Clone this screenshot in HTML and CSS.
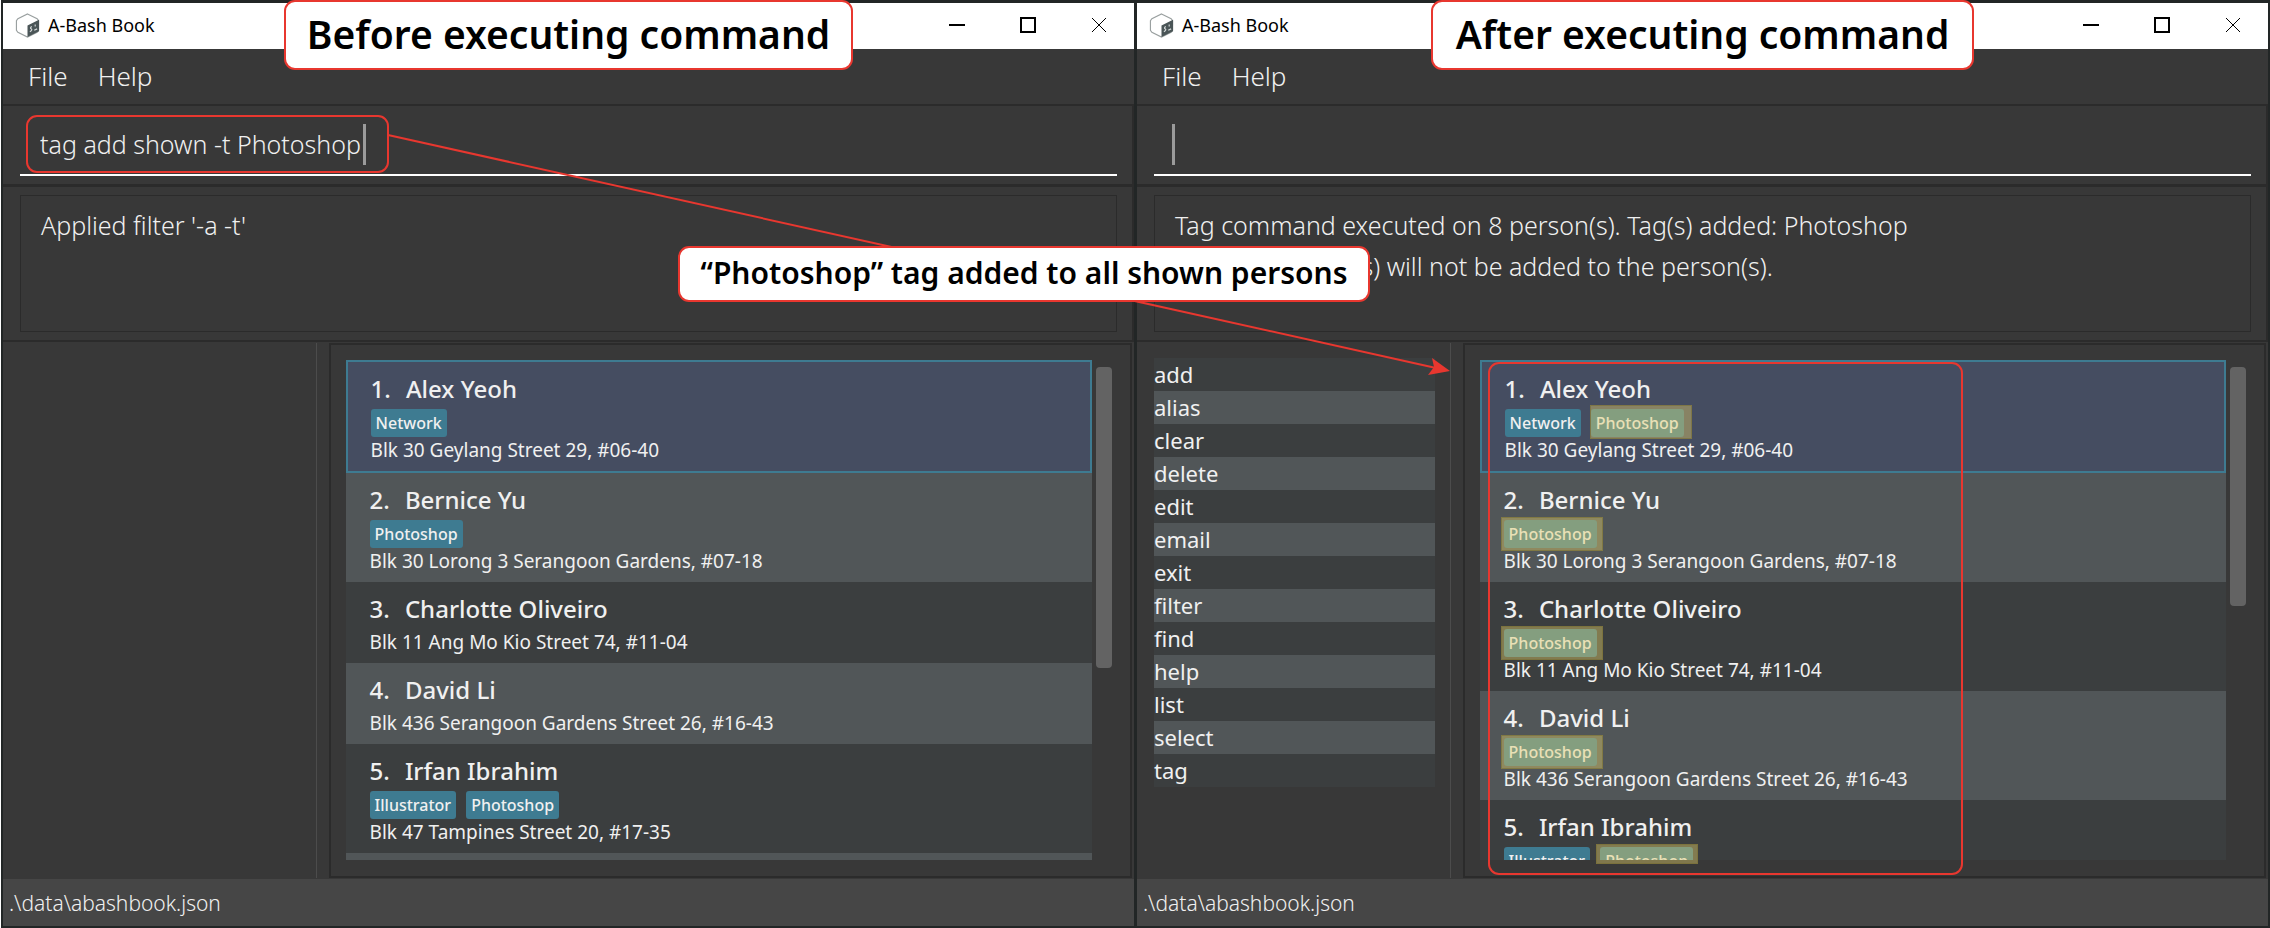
FILE: index.html
```html
<!DOCTYPE html>
<html lang="en">
<head>
<meta charset="utf-8">
<title>A-Bash Book: tag add</title>
<link rel="stylesheet" href="styles.css">
</head>
<body>
<main class="stage">
  <section class="window">
    <header class="titlebar">
      <svg class="logo" viewBox="0 0 26 26" aria-hidden="true">
        <path d="M13 1 L23 6 L24.500 8 V18 L23 20 L13 25 L3 20 L1.500 18 V8 L3 6 Z" fill="#fff" stroke="#9aa0a0" stroke-width="1.200"/>
        <path d="M13 13 L25 7 V19 L13 25 Z" fill="#4a5557"/>
        <path d="M17.500 14 q-2.500 1.500 -.5 2.500 q1.500 1 -1.500 3 M20 18 l3 -1.500 M21 12 v2" fill="none" stroke="#d5dada" stroke-width="1.200"/>
      </svg>
      <h1 class="app-name">A-Bash Book</h1>
      <div class="window-buttons">
        <button class="window-button" type="button" aria-label="Minimize"><svg viewBox="0 0 16 16"><path d="M0 8H16"/></svg></button>
        <button class="window-button" type="button" aria-label="Maximize"><svg viewBox="0 0 16 16"><path d="M1 1H15V15H1Z"/></svg></button>
        <button class="window-button" type="button" aria-label="Close"><svg viewBox="0 0 16 16"><path d="M1 1L15 15M15 1L1 15"/></svg></button>
      </div>
    </header>
    <nav class="menubar">
      <button class="menu" type="button">File</button>
      <button class="menu" type="button">Help</button>
    </nav>
    <div class="command-pane">
      <input class="command" type="text" aria-label="Command" value="tag add shown -t Photoshop">
      <span class="caret caret-end"></span>
    </div>
    <div class="result-pane">
      <div class="result">Applied filter '-a -t'</div>
    </div>
    <div class="content">
      <aside class="sidebar"></aside>
      <div class="people-panel">
        <ol class="people">
          <li class="person selected">
            <h2 class="name"><span>1.</span><span>Alex Yeoh</span></h2>
            <div class="tags"><span class="tag">Network</span></div>
            <p class="address">Blk 30 Geylang Street 29, #06-40</p>
          </li>
          <li class="person">
            <h2 class="name"><span>2.</span><span>Bernice Yu</span></h2>
            <div class="tags"><span class="tag">Photoshop</span></div>
            <p class="address">Blk 30 Lorong 3 Serangoon Gardens, #07-18</p>
          </li>
          <li class="person">
            <h2 class="name"><span>3.</span><span>Charlotte Oliveiro</span></h2>
            <p class="address">Blk 11 Ang Mo Kio Street 74, #11-04</p>
          </li>
          <li class="person">
            <h2 class="name"><span>4.</span><span>David Li</span></h2>
            <p class="address">Blk 436 Serangoon Gardens Street 26, #16-43</p>
          </li>
          <li class="person">
            <h2 class="name"><span>5.</span><span>Irfan Ibrahim</span></h2>
            <div class="tags"><span class="tag">Illustrator</span><span class="tag">Photoshop</span></div>
            <p class="address">Blk 47 Tampines Street 20, #17-35</p>
          </li>
          <li class="person"></li>
        </ol>
        <div class="scroll-track"><div class="thumb thumb-long"></div></div>
      </div>
    </div>
    <footer class="statusbar">.\data\abashbook.json</footer>
  </section>

  <section class="window">
    <header class="titlebar">
      <svg class="logo" viewBox="0 0 26 26" aria-hidden="true">
        <path d="M13 1 L23 6 L24.500 8 V18 L23 20 L13 25 L3 20 L1.500 18 V8 L3 6 Z" fill="#fff" stroke="#9aa0a0" stroke-width="1.200"/>
        <path d="M13 13 L25 7 V19 L13 25 Z" fill="#4a5557"/>
        <path d="M17.500 14 q-2.500 1.500 -.5 2.500 q1.500 1 -1.500 3 M20 18 l3 -1.500 M21 12 v2" fill="none" stroke="#d5dada" stroke-width="1.200"/>
      </svg>
      <h1 class="app-name">A-Bash Book</h1>
      <div class="window-buttons">
        <button class="window-button" type="button" aria-label="Minimize"><svg viewBox="0 0 16 16"><path d="M0 8H16"/></svg></button>
        <button class="window-button" type="button" aria-label="Maximize"><svg viewBox="0 0 16 16"><path d="M1 1H15V15H1Z"/></svg></button>
        <button class="window-button" type="button" aria-label="Close"><svg viewBox="0 0 16 16"><path d="M1 1L15 15M15 1L1 15"/></svg></button>
      </div>
    </header>
    <nav class="menubar">
      <button class="menu" type="button">File</button>
      <button class="menu" type="button">Help</button>
    </nav>
    <div class="command-pane">
      <input class="command" type="text" aria-label="Command" value="">
      <span class="caret caret-start"></span>
    </div>
    <div class="result-pane">
      <div class="result">Tag command executed on 8 person(s). Tag(s) added: Photoshop<br>The existing tag(s) will not be added to the person(s).</div>
    </div>
    <div class="content">
      <aside class="sidebar">
        <ul class="commands">
          <li>add</li>
          <li>alias</li>
          <li>clear</li>
          <li>delete</li>
          <li>edit</li>
          <li>email</li>
          <li>exit</li>
          <li>filter</li>
          <li>find</li>
          <li>help</li>
          <li>list</li>
          <li>select</li>
          <li>tag</li>
        </ul>
      </aside>
      <div class="people-panel">
        <ol class="people">
          <li class="person selected">
            <h2 class="name"><span>1.</span><span>Alex Yeoh</span></h2>
            <div class="tags"><span class="tag">Network</span><span class="tag">Photoshop</span></div>
            <p class="address">Blk 30 Geylang Street 29, #06-40</p>
          </li>
          <li class="person">
            <h2 class="name"><span>2.</span><span>Bernice Yu</span></h2>
            <div class="tags"><span class="tag">Photoshop</span></div>
            <p class="address">Blk 30 Lorong 3 Serangoon Gardens, #07-18</p>
          </li>
          <li class="person">
            <h2 class="name"><span>3.</span><span>Charlotte Oliveiro</span></h2>
            <div class="tags"><span class="tag">Photoshop</span></div>
            <p class="address">Blk 11 Ang Mo Kio Street 74, #11-04</p>
          </li>
          <li class="person">
            <h2 class="name"><span>4.</span><span>David Li</span></h2>
            <div class="tags"><span class="tag">Photoshop</span></div>
            <p class="address">Blk 436 Serangoon Gardens Street 26, #16-43</p>
          </li>
          <li class="person">
            <h2 class="name"><span>5.</span><span>Irfan Ibrahim</span></h2>
            <div class="tags"><span class="tag">Illustrator</span><span class="tag">Photoshop</span></div>
          </li>
        </ol>
        <div class="scroll-track"><div class="thumb thumb-short"></div></div>
      </div>
    </div>
    <footer class="statusbar">.\data\abashbook.json</footer>
  </section>

  <div class="mark mark-1"></div>
  <div class="mark mark-2"></div>
  <div class="mark mark-3"></div>
  <div class="mark mark-4"></div>
  <div class="mark mark-5"></div>
  <div class="frame frame-command"></div>
  <div class="frame frame-people"></div>
  <svg class="arrow" aria-hidden="true">
    <path d="M388 135L1436 368" fill="none" stroke="#e8372f" stroke-width="2"/>
    <path d="M1450 371L1432 358L1434 367L1428 375Z" fill="#e8372f"/>
  </svg>
  <div class="callout callout-before">Before executing command</div>
  <div class="callout callout-after">After executing command</div>
  <div class="callout callout-tag">“Photoshop” tag added to all shown persons</div>
</main>
</body>
</html>
```
FILE: styles.css
```css
* {
  box-sizing: border-box;
}

body {
  margin: 0;
  background: #222626;
  color: #f0f0f0;
  font-family: "Noto Sans", "Open Sans", sans-serif;
}

h1, h2, p, ul, ol {
  margin: 0;
  padding: 0;
  font-weight: 400;
  list-style: none;
}

button, input {
  border: 0;
  margin: 0;
  padding: 0;
  background: none;
  color: inherit;
  font-family: inherit;
}

.stage {
  position: relative;
  display: grid;
  grid-template-columns: 1fr 1fr;
  gap: 3px;
  height: 100vh;
  padding: 3px 2px 2px;
  border-left: 1px solid #fff;
}

.window {
  display: flex;
  flex-direction: column;
  min-width: 0;
  min-height: 0;
  background: #383838;
}

.titlebar {
  display: flex;
  align-items: center;
  gap: 8px;
  height: 46px;
  padding: 0 0 2px 12px;
  background: #fff;
  color: #000;
}

.logo {
  width: 25px;
  height: 25px;
}

.app-name {
  font-size: 18px;
  line-height: 24px;
}

.window-buttons {
  display: flex;
  margin-left: auto;
}

.window-button {
  display: grid;
  place-items: center;
  width: 71px;
  height: 44px;
}

.window-button svg {
  width: 16px;
  height: 16px;
  fill: none;
  stroke: #000;
  stroke-width: 2;
}

.window-button:last-child svg {
  stroke-width: 1;
}

.menubar {
  display: flex;
  height: 55px;
  padding: 0 0 2px 10px;
}

.menu {
  padding: 0 15px;
  font-size: 26px;
  font-weight: 300;
}

.command-pane {
  position: relative;
  padding: 8px 15px 8px 17px;
  border: 0 solid #2b2b2b;
  border-width: 2px 2px 3px 0;
}

.command {
  display: block;
  width: 100%;
  height: 62px;
  padding: 0 20px;
  border-bottom: 2px solid #fff;
  outline: none;
  font-size: 25px;
  font-weight: 300;
}

.caret {
  position: absolute;
  top: 18px;
  width: 3px;
  height: 41px;
  background: #9b9b9b;
}

.caret-start {
  left: 35px;
}

.caret-end {
  left: 360px;
}

.result-pane {
  padding: 8px 15px 8px 17px;
  border: 0 solid #2b2b2b;
  border-width: 0 2px 2px 0;
}

.result {
  min-height: 137px;
  padding: 9px 20px;
  border: 1px solid #2b2b2b;
  font-size: 25px;
  font-weight: 300;
  line-height: 41px;
}

.content {
  display: grid;
  grid-template-columns: 5fr 13fr;
  flex: 1;
  min-height: 0;
  padding: 1px 2px 1px 0;
}

.sidebar {
  padding: 15px 15px 0 17px;
  border-right: 1px solid #4c4c4c;
}

.commands {
  font-size: 22px;
  line-height: 33px;
}

.commands li:nth-child(odd),
.person:nth-child(odd) {
  background: #3b3e3f;
}

.commands li:nth-child(even),
.person:nth-child(even) {
  background: #515658;
}

.people-panel {
  display: flex;
  gap: 4px;
  min-width: 0;
  min-height: 0;
  margin-left: 12px;
  padding: 15px 18px 16px 15px;
  border: 2px solid #2b2b2b;
}

.people {
  flex: 1;
  min-width: 0;
  overflow: hidden;
}

.person {
  padding: 11px 24px 8px;
}

.people .selected {
  border: 2px solid #3e7b91;
  padding: 11px 23px 8px;
  background: #454d61;
}

.name {
  display: flex;
  gap: 15px;
  margin-bottom: 4px;
  font-size: 24px;
  font-weight: 500;
  line-height: 32px;
}

.tags {
  display: flex;
  gap: 10px;
}

.tag {
  height: 28px;
  padding: 0 5px;
  border-radius: 3px;
  background: #3e7b91;
  font-size: 16px;
  font-weight: 500;
  line-height: 28px;
}

.address {
  font-size: 19px;
  line-height: 26px;
}

.scroll-track {
  width: 16px;
  padding-top: 7px;
}

.thumb {
  border-radius: 4px;
  background: #636363;
}

.thumb-long {
  height: 301px;
}

.thumb-short {
  height: 239px;
}

.statusbar {
  padding: 2px 0 0 6px;
  background: #464646;
  font-size: 21px;
  font-weight: 300;
  line-height: 45px;
}

/* Annotations drawn over the two windows */

.callout,
.frame,
.mark,
.arrow {
  position: absolute;
  pointer-events: none;
}

.callout {
  border: 2px solid #e8372f;
  border-radius: 11px;
  background: #fff;
  color: #000;
  font-weight: 600;
  text-align: center;
  white-space: nowrap;
}

.callout-before,
.callout-after {
  top: 0;
  height: 70px;
  font-size: 39px;
  line-height: 64px;
}

.callout-before {
  left: 283px;
  width: 569px;
}

.callout-after {
  left: 1430px;
  width: 543px;
}

.callout-tag {
  top: 246px;
  left: 677px;
  width: 692px;
  height: 56px;
  font-size: 30px;
  line-height: 50px;
}

.arrow {
  top: 0;
  left: -1px;
  width: 100%;
  height: 100%;
}

.frame {
  border: 2px solid #e8372f;
  border-radius: 11px;
}

.frame-command {
  top: 115px;
  left: 25px;
  width: 363px;
  height: 58px;
}

.frame-people {
  top: 362px;
  left: 1487px;
  width: 475px;
  height: 513px;
}

.mark {
  left: 1500px;
  width: 102px;
  height: 34px;
  border: 1px solid rgba(120, 110, 50, 0.6);
  background: rgba(226, 205, 104, 0.43);
}

.mark-1 {
  top: 405px;
  left: 1589px;
}

.mark-2 {
  top: 517px;
}

.mark-3 {
  top: 626px;
}

.mark-4 {
  top: 735px;
}

.mark-5 {
  top: 844px;
  left: 1595px;
  height: 20px;
}
```
